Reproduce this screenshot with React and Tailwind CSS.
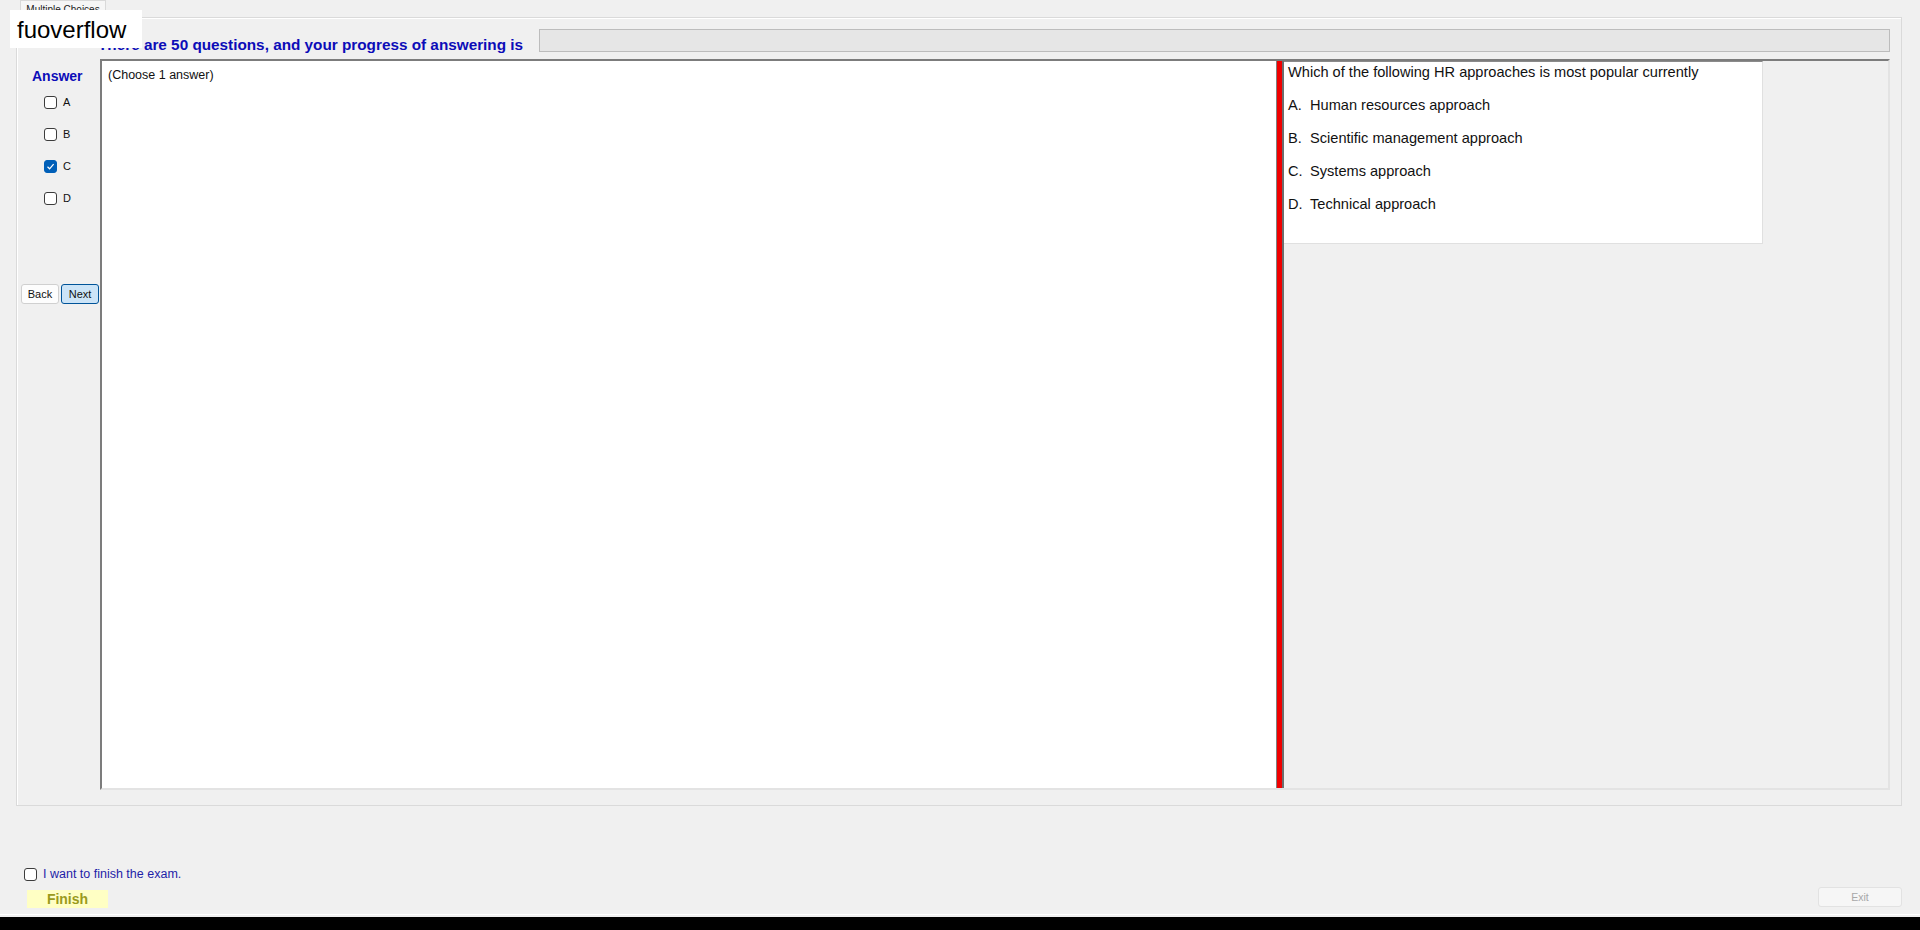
import React from 'react';

const options = [
  { key: 'A', text: 'Human resources approach', checked: false },
  { key: 'B', text: 'Scientific management approach', checked: false },
  { key: 'C', text: 'Systems approach', checked: true },
  { key: 'D', text: 'Technical approach', checked: false },
];

function Box({ checked }) {
  if (checked) {
    return (
      <span className="flex items-center justify-center w-[13px] h-[13px] rounded-[3px] bg-[#005fb8] border border-[#005fb8]">
        <svg width="9" height="9" viewBox="0 0 9 9" fill="none">
          <path d="M1.5 4.8 L3.6 6.8 L7.6 2.2" stroke="#fff" strokeWidth="1.2" />
        </svg>
      </span>
    );
  }
  return <span className="block w-[13px] h-[13px] rounded-[3px] bg-white border border-[#3c3c3c]" />;
}

export default function App() {
  return (
    <div className="relative w-[1920px] h-[930px] overflow-hidden bg-[#f0f0f0] text-black font-['Liberation_Sans',Arial,sans-serif]">
      {/* tab strip */}
      <div className="h-[17px] flex pl-[20px]">
        <div className="w-[86px] h-[18px] border border-b-0 border-[#d9d9d9] bg-[#f6f6f6] text-[10px] leading-[18px] text-center text-[#222] whitespace-nowrap">
          Multiple Choices
        </div>
      </div>

      {/* tab page */}
      <div className="ml-[16px] w-[1886px] h-[789px] border border-[#dadada] shadow-[inset_1px_1px_0_#fff] flex flex-col">
        {/* header row */}
        <div className="flex items-start h-[23px] mt-[11px]">
          <div className="w-[522px] mt-[4px] pl-[81px] text-[15.3px] font-bold text-[#0c0cb8] whitespace-nowrap leading-[23px]">
            There are 50 questions, and your progress of answering is
          </div>
          <div className="w-[1351px] h-[23px] bg-[#e6e6e6] border border-[#bcbcbc]" />
        </div>

        {/* body row */}
        <div className="flex mt-[7px] h-[731px]">
          {/* answer column */}
          <div className="w-[83px] flex flex-col">
            <div className="pl-[15px] pt-[9px] text-[14px] leading-[17px] font-bold text-[#0c0cb8]">Answer</div>
            <div className="flex flex-col gap-[19px] pl-[27px] mt-[11px]">
              {options.map((o) => (
                <div key={o.key} className="flex items-center gap-[6px] h-[13px]">
                  <Box checked={o.checked} />
                  <span className="text-[11px] leading-[13px] text-[#111]">{o.key}</span>
                </div>
              ))}
            </div>
            <div className="flex gap-[2px] pl-[4px] mt-[79px]">
              <button className="w-[38px] h-[20px] bg-[#fdfdfd] border border-[#d0d0d0] rounded-[3px] text-[11px] leading-[18px] text-[#111]">Back</button>
              <button className="w-[38px] h-[20px] bg-[#cce4f7] border border-[#005499] rounded-[3px] text-[11px] leading-[18px] text-[#111]">Next</button>
            </div>
          </div>

          {/* split container */}
          <div className="w-[1790px] h-[731px] flex border-2 border-t-[#7c7c7c] border-l-[#7c7c7c] border-r-[#e3e3e3] border-b-[#e3e3e3]">
            <div className="w-[1174px] bg-white pl-[6px] pt-[7px] text-[12.5px] leading-[15px] text-[#111]">
              (Choose 1 answer)
            </div>
            <div className="w-[8px] flex">
              <div className="w-[1px] bg-[#808080]" />
              <div className="w-[5px] bg-[#f00000]" />
              <div className="w-[2px] bg-[#6d6d6d]" />
            </div>
            <div className="flex-1 bg-[#f0f0f0]">
              <div className="w-[479px] h-[183px] bg-white border-t border-t-[#8a8a8a] border-r border-r-[#e0e0e0] border-b border-b-[#e0e0e0] pl-[4px] pt-[2px] text-[14.6px] leading-[17px] text-[#111]">
                <div>Which of the following HR approaches is most popular currently</div>
                {options.map((o) => (
                  <div key={o.key} className="mt-[16px] flex">
                    <span className="w-[22px]">{o.key}.</span>
                    <span>{o.text}</span>
                  </div>
                ))}
              </div>
            </div>
          </div>
        </div>
      </div>

      {/* bottom area */}
      <div className="h-[108px] flex justify-between">
        <div className="pl-[24px] pt-[62px] flex flex-col">
          <div className="flex items-center gap-[6px] h-[13px]">
            <Box checked={false} />
            <span className="text-[12.5px] leading-[13px] text-[#1e1ea8]">I want to finish the exam.</span>
          </div>
          <div className="ml-[3px] mt-[9px] w-[81px] h-[18px] bg-[#ffffc4] text-center text-[14px] leading-[18px] font-bold text-[#9a9a1c]">
            Finish
          </div>
        </div>
        <div className="pr-[18px] pt-[81px]">
          <div className="w-[84px] h-[20px] bg-[#f6f6f6] border border-[#e2e2e2] rounded-[3px] text-center text-[10.5px] leading-[18px] text-[#a8a8a8]">
            Exit
          </div>
        </div>
      </div>
      <div className="h-[1px] bg-white" />
      <div className="h-[2px]" />
      <div className="h-[13px] bg-black" />

      {/* watermark label */}
      <div className="absolute left-[10px] top-[10px] w-[132px] h-[38px] bg-white pl-[7px] text-[24px] leading-[38px] pt-[1px]">
        fuoverflow
      </div>
    </div>
  );
}
